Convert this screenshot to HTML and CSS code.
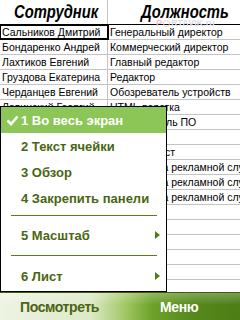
FILE: index.html
```html
<!DOCTYPE html>
<html>
<head>
  <meta charset="utf-8" />
  <title>Excel Mobile</title>
  <link rel="stylesheet" href="styles.css">
</head>
<body>
  <div class="screen">
    <div class="sheet">
      <div class="row head">
        <div class="cell"><span class="title">Сотрудник</span></div>
        <div class="cell"><span class="title">Должность</span></div>
      </div>
      <div class="row">
        <div class="cell sel">Сальников Дмитрий</div>
        <div class="cell">Генеральный директор</div>
      </div>
      <div class="row">
        <div class="cell">Бондаренко Андрей</div>
        <div class="cell">Коммерческий директор</div>
      </div>
      <div class="row">
        <div class="cell">Лахтиков Евгений</div>
        <div class="cell">Главный редактор</div>
      </div>
      <div class="row">
        <div class="cell">Груздова Екатерина</div>
        <div class="cell">Редактор</div>
      </div>
      <div class="row">
        <div class="cell">Черданцев Евгений</div>
        <div class="cell">Обозреватель устройств</div>
      </div>
      <div class="row">
        <div class="cell">Лавинский Георгий</div>
        <div class="cell">HTML-верстка</div>
      </div>
      <div class="row">
        <div class="cell"></div>
        <div class="cell">Руководитель ПО</div>
      </div>
      <div class="row"><div class="cell"></div><div class="cell"></div></div>
      <div class="row">
        <div class="cell"></div>
        <div class="cell">Программист</div>
      </div>
      <div class="row">
        <div class="cell"></div>
        <div class="cell">Сотрудница рекламной службы</div>
      </div>
      <div class="row">
        <div class="cell"></div>
        <div class="cell">Сотрудница рекламной службы</div>
      </div>
      <div class="row">
        <div class="cell"></div>
        <div class="cell">Сотрудница рекламной службы</div>
      </div>
      <div class="row"><div class="cell"></div><div class="cell"></div></div>
      <div class="row"><div class="cell"></div><div class="cell"></div></div>
      <div class="row"><div class="cell"></div><div class="cell"></div></div>
      <div class="row"><div class="cell"></div><div class="cell"></div></div>
      <div class="row"><div class="cell"></div><div class="cell"></div></div>
      <div class="row"><div class="cell"></div><div class="cell"></div></div>
    </div>

    <div class="watermark"><span class="wm-p">P</span><span class="wm-o"></span>RTAVIK.ru</div>

    <!-- всплывающее меню "Посмотреть" -->
    <div class="menu">
      <div class="item active">
        <span class="check">
          <svg width="13" height="11" viewBox="0 0 13 11"><polyline points="1.5,5.5 5,9 11.5,1.5" fill="none" stroke="#fff" stroke-width="2.6"/></svg>
        </span>1 Во весь экран
      </div>
      <div class="item"><span class="check"></span>2 Текст ячейки</div>
      <div class="item"><span class="check"></span>3 Обзор</div>
      <div class="item"><span class="check"></span>4 Закрепить панели</div>
      <div class="sep"></div>
      <div class="item"><span class="check"></span>5 Масштаб<span class="arrow"></span></div>
      <div class="sep"></div>
      <div class="item"><span class="check"></span>6 Лист<span class="arrow"></span></div>
    </div>

    <div class="softkeys">
      <div class="key left">Посмотреть</div>
      <div class="key right">Меню</div>
    </div>
  </div>
</body>
</html>
```

FILE: styles.css
```css
body {
  margin: 0;
  padding: 0;
  font-family: "Liberation Sans", Arial, sans-serif;
}

.screen {
  position: relative;
  width: 240px;
  height: 320px;
  display: flex;
  flex-direction: column;
  overflow: hidden;
  background: #fff;
}

.sheet {
  height: 292px;
  overflow: hidden;
  flex: none;
}

.row {
  display: grid;
  grid-template-columns: 108px 1fr;
  height: 15px;
  box-sizing: border-box;
  border-bottom: 1px solid #c4c4c4;
}

.cell {
  font-size: 10.5px;
  line-height: 14px;
  padding-left: 2px;
  white-space: nowrap;
  overflow: hidden;
  color: #000;
}

.cell:first-child {
  border-right: 1px solid #c4c4c4;
}

.cell.sel {
  outline: 2px solid #000;
  outline-offset: -1px;
}

.row.head {
  height: 25px;
  border-bottom: 1px solid #000;
}

.row.head .cell {
  font-size: 18px;
  font-weight: bold;
  font-style: italic;
  line-height: 24px;
  padding-left: 14px;
}

.row.head .cell + .cell {
  padding-left: 33px;
}

.title {
  display: inline-block;
  transform: scaleX(0.82);
  transform-origin: left center;
}

.watermark {
  position: absolute;
  left: 156px;
  top: 18px;
  font-size: 9px;
  font-weight: bold;
  color: #dcdce6;
  display: flex;
  align-items: center;
}

.wm-p {
  color: #f2c6c6;
}

.wm-o {
  width: 7px;
  height: 7px;
  border-radius: 50%;
  border: 1px solid #f2caca;
  box-sizing: border-box;
  margin: 0 1px;
}

.menu {
  position: absolute;
  left: 0;
  top: 106px;
  width: 167px;
  height: 186px;
  box-sizing: border-box;
  border: 1px solid #000;
  background: #fff;
}

.item {
  height: 26px;
  display: flex;
  align-items: center;
  padding-left: 5px;
  font-size: 13px;
  font-weight: bold;
  color: #4a6612;
  white-space: nowrap;
}

.item.active {
  background: #8cc656;
  color: #fff;
}

.check {
  width: 15px;
  flex: none;
  display: flex;
  align-items: center;
}

.arrow {
  margin-left: auto;
  margin-right: 6px;
  width: 0;
  height: 0;
  border-top: 4px solid transparent;
  border-bottom: 4px solid transparent;
  border-left: 5px solid #4f7f12;
}

.sep {
  height: 1px;
  background: #5a7a1c;
  margin: 4px 9px 6px 10px;
}

.sep + .item + .sep {
  margin: 7px 9px 7px 10px;
}

.softkeys {
  height: 28px;
  box-sizing: border-box;
  border-top: 1px solid #3f5c12;
  display: grid;
  grid-template-columns: 1fr 1fr;
  align-items: center;
  background:
    linear-gradient(to bottom, rgba(255, 255, 255, 0.25), rgba(255, 255, 255, 0) 45%),
    linear-gradient(to right, #eef3e3 0%, #dce9c6 38%, #a2c866 52%, #6fa22c 63%, #56891c 80%, #4c7d16 100%);
}

.key {
  font-size: 14px;
  font-weight: bold;
  letter-spacing: -0.4px;
  line-height: 26px;
}

.key.left {
  padding-left: 20px;
  color: #4b6414;
}

.key.right {
  padding-left: 40px;
  color: #fff;
}
```
